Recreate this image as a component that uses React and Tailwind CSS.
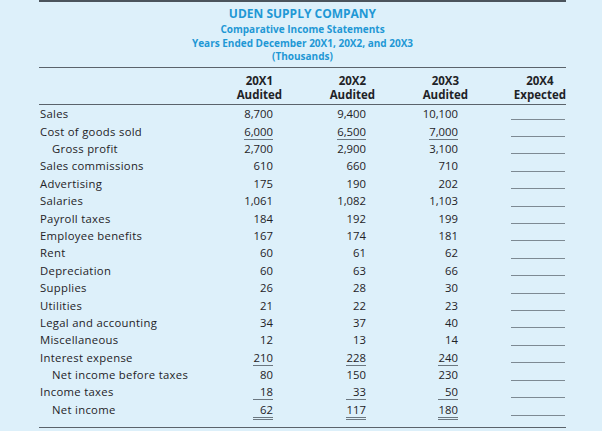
const rows = [
  { label: 'Sales', v: ['8,700', '9,400', '10,100'] },
  { label: 'Cost of goods sold', v: ['6,000', '6,500', '7,000'], line: 'single' },
  { label: 'Gross profit', v: ['2,700', '2,900', '3,100'], indent: true },
  { label: 'Sales commissions', v: ['610', '660', '710'] },
  { label: 'Advertising', v: ['175', '190', '202'] },
  { label: 'Salaries', v: ['1,061', '1,082', '1,103'] },
  { label: 'Payroll taxes', v: ['184', '192', '199'] },
  { label: 'Employee benefits', v: ['167', '174', '181'] },
  { label: 'Rent', v: ['60', '61', '62'] },
  { label: 'Depreciation', v: ['60', '63', '66'] },
  { label: 'Supplies', v: ['26', '28', '30'] },
  { label: 'Utilities', v: ['21', '22', '23'] },
  { label: 'Legal and accounting', v: ['34', '37', '40'] },
  { label: 'Miscellaneous', v: ['12', '13', '14'] },
  { label: 'Interest expense', v: ['210', '228', '240'], line: 'single' },
  { label: 'Net income before taxes', v: ['80', '150', '230'], indent: true },
  { label: 'Income taxes', v: ['18', '33', '50'], line: 'single' },
  { label: 'Net income', v: ['62', '117', '180'], indent: true, line: 'double' },
]

const cols = ['20X1', '20X2', '20X3']

function Num({ value, line }) {
  const cls =
    line === 'single'
      ? 'border-b border-[#6b7780]'
      : line === 'double'
        ? 'border-b-[3px] border-double border-[#6b7780]'
        : ''
  return <span className={`inline-block min-w-[20px] text-right leading-[14px] ${cls}`}>{value}</span>
}

export default function App() {
  return (
    <div
      className="h-[431px] w-[602px] overflow-hidden bg-[#ddf0fa] text-[#1f2327]"
      style={{ fontFamily: '"Open Sans", "Noto Sans", sans-serif' }}
    >
      <div className="ml-[39px] w-[527px] border-t-2 border-[#4b545c]">
        <div className="pt-[4px] text-center font-bold text-[#1f98d5]">
          <div className="text-[12px] leading-[16px]">UDEN SUPPLY COMPANY</div>
          <div className="text-[10px] leading-[14px]">Comparative Income Statements</div>
          <div className="text-[10px] leading-[14px]">Years Ended December 20X1, 20X2, and 20X3</div>
          <div className="text-[10px] leading-[13px]">(Thousands)</div>
        </div>
        <div className="mt-[4px] border-t-[1.5px] border-[#5a636b]" />
        <div className="grid grid-cols-[172px_93px_93px_93px_76px] pt-[6px] text-[11.5px] leading-[14px] font-bold">
          <div />
          {cols.map((c) => (
            <div key={c} className="pr-[22px] text-right">
              <div className="inline-block text-center">
                <div>{c}</div>
                <div>Audited</div>
              </div>
            </div>
          ))}
          <div className="text-right">
            <div className="inline-block text-center">
              <div>20X4</div>
              <div>Expected</div>
            </div>
          </div>
        </div>
        <div className="mt-[2px] border-t-[1.5px] border-[#5a636b]" />
        <div className="pt-[1px] pb-[8px] text-[11.3px]">
          {rows.map((r) => (
            <div key={r.label} className="grid h-[17.4px] grid-cols-[172px_93px_93px_93px_76px] items-center">
              <div className={`tracking-[0.3px] ${r.indent ? 'pl-[13px]' : 'pl-[1px]'}`}>{r.label}</div>
              {r.v.map((val, i) => (
                <div key={i} className={`text-right ${i === 2 ? 'pr-[32px]' : 'pr-[31px]'}`}>
                  <Num value={val} line={r.line} />
                </div>
              ))}
              <div className="flex justify-end pr-[1px]">
                <div className="mt-[9px] h-px w-[54px] bg-[#7d8a93]" />
              </div>
            </div>
          ))}
        </div>
        <div className="border-t-[1.5px] border-[#5a636b]" />
      </div>
    </div>
  )
}
